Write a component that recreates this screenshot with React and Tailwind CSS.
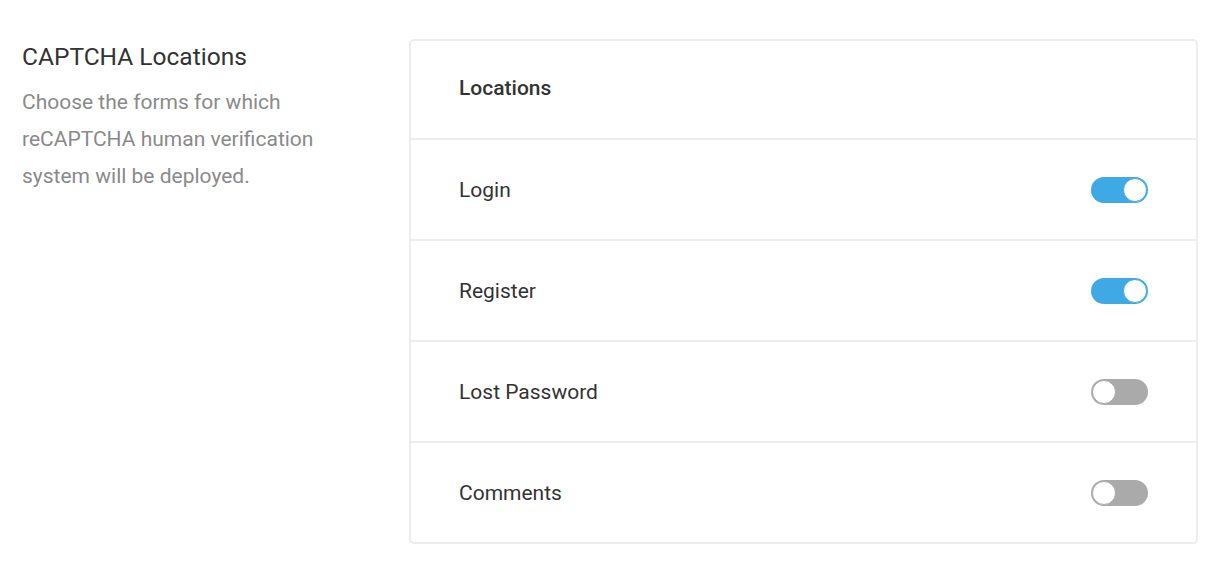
import React, { useState } from 'react';

function Toggle({ on, onChange }) {
  return (
    <button
      type="button"
      onClick={onChange}
      className={`relative w-[57px] h-[26px] rounded-full flex items-center ${on ? 'bg-[#3fa9e5]' : 'bg-[#aaaaaa]'}`}
    >
      <span
        className={`absolute top-[1px] w-[24px] h-[24px] rounded-full bg-white border ${
          on ? 'right-[1px] border-[#3fa9e5]' : 'left-[1px] border-[#aaaaaa]'
        }`}
      />
    </button>
  );
}

export default function App() {
  const [locations, setLocations] = useState([
    { id: 'login', label: 'Login', on: true },
    { id: 'register', label: 'Register', on: true },
    { id: 'lost', label: 'Lost Password', on: false },
    { id: 'comments', label: 'Comments', on: false },
  ]);

  const toggle = (id) =>
    setLocations(locations.map(l => (l.id === id ? { ...l, on: !l.on } : l)));

  return (
    <div className="min-h-screen bg-white flex pt-[39px] pl-[22px] pr-[22px]" style={{ fontFamily: 'Roboto, "Noto Sans", sans-serif' }}>
      <div className="w-[387px] shrink-0 pt-[4px]">
        <h2 className="text-[24.5px] leading-[28px] text-[#333333]">CAPTCHA Locations</h2>
        <p className="mt-[13px] text-[21px] leading-[37px] text-[#8a8a8a] w-[310px]">
          Choose the forms for which reCAPTCHA human verification system will be deployed.
        </p>
      </div>
      <div className="w-[789px] border-2 border-[#ededed] rounded-[5px] self-start">
        <div className="h-[97px] flex items-center px-[48px] pb-[2px]">
          <h3 className="text-[21px] font-medium text-[#333333]">Locations</h3>
        </div>
        {locations.map(l => (
          <div key={l.id} className="h-[101px] border-t-2 border-[#ededed] flex items-center justify-between pl-[48px] pr-[48px]">
            <span className="text-[21px] text-[#333333] pt-[2px]">{l.label}</span>
            <Toggle on={l.on} onChange={() => toggle(l.id)} />
          </div>
        ))}
      </div>
    </div>
  );
}
